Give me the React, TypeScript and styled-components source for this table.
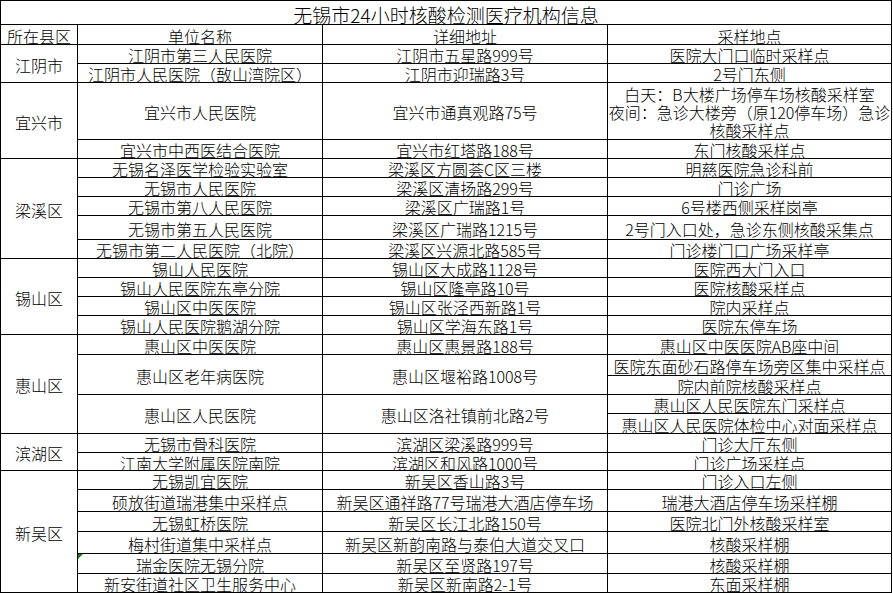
import React from "react";
import styled, { createGlobalStyle } from "styled-components";

const GlobalStyle = createGlobalStyle`
  html, body {
    margin: 0;
    padding: 0;
    background: #fff;
  }
  body {
    font-family: "Noto Sans CJK SC", "Noto Sans", sans-serif;
    color: #000;
  }
`;

// heights of every sheet row, border lines excluded
const rowHeights = [23, 19, 18, 18, 56, 18, 18, 18, 18, 23, 18, 18, 18, 18, 18, 19, 20, 18, 18, 19, 18, 17, 18, 21, 19, 21, 19, 18];

type Unit = { name: string; addr: string; spots: string[]; flag?: boolean };
type District = { name: string; units: Unit[] };

const districts: District[] = [
  {
    name: "江阴市",
    units: [
      { name: "江阴市第三人民医院", addr: "江阴市五星路999号", spots: ["医院大门口临时采样点"] },
      { name: "江阴市人民医院（敔山湾院区）", addr: "江阴市迎瑞路3号", spots: ["2号门东侧"] },
    ],
  },
  {
    name: "宜兴市",
    units: [
      {
        name: "宜兴市人民医院",
        addr: "宜兴市通真观路75号",
        spots: ["白天：B大楼广场停车场核酸采样室\n夜间：急诊大楼旁（原120停车场）急诊\n核酸采样点"],
      },
      { name: "宜兴市中西医结合医院", addr: "宜兴市红塔路188号", spots: ["东门核酸采样点"] },
    ],
  },
  {
    name: "梁溪区",
    units: [
      { name: "无锡名泽医学检验实验室", addr: "梁溪区方圆荟C区三楼", spots: ["明慈医院急诊科前"] },
      { name: "无锡市人民医院", addr: "梁溪区清扬路299号", spots: ["门诊广场"] },
      { name: "无锡市第八人民医院", addr: "梁溪区广瑞路1号", spots: ["6号楼西侧采样岗亭"] },
      { name: "无锡市第五人民医院", addr: "梁溪区广瑞路1215号", spots: ["2号门入口处，急诊东侧核酸采集点"] },
      { name: "无锡市第二人民医院（北院）", addr: "梁溪区兴源北路585号", spots: ["门诊楼门口广场采样亭"] },
    ],
  },
  {
    name: "锡山区",
    units: [
      { name: "锡山人民医院", addr: "锡山区大成路1128号", spots: ["医院西大门入口"] },
      { name: "锡山人民医院东亭分院", addr: "锡山区隆亭路10号", spots: ["医院核酸采样点"] },
      { name: "锡山区中医医院", addr: "锡山区张泾西新路1号", spots: ["院内采样点"] },
      { name: "锡山人民医院鹅湖分院", addr: "锡山区学海东路1号", spots: ["医院东停车场"] },
    ],
  },
  {
    name: "惠山区",
    units: [
      { name: "惠山区中医医院", addr: "惠山区惠景路188号", spots: ["惠山区中医医院AB座中间"] },
      {
        name: "惠山区老年病医院",
        addr: "惠山区堰裕路1008号",
        spots: ["医院东面砂石路停车场旁区集中采样点", "院内前院核酸采样点"],
      },
      {
        name: "惠山区人民医院",
        addr: "惠山区洛社镇前北路2号",
        spots: ["惠山区人民医院东门采样点", "惠山区人民医院体检中心对面采样点"],
      },
    ],
  },
  {
    name: "滨湖区",
    units: [
      { name: "无锡市骨科医院", addr: "滨湖区梁溪路999号", spots: ["门诊大厅东侧"] },
      { name: "江南大学附属医院南院", addr: "滨湖区和风路1000号", spots: ["门诊广场采样点"] },
    ],
  },
  {
    name: "新吴区",
    units: [
      { name: "无锡凯宜医院", addr: "新吴区香山路3号", spots: ["门诊入口左侧"] },
      { name: "硕放街道瑞港集中采样点", addr: "新吴区通祥路77号瑞港大酒店停车场", spots: ["瑞港大酒店停车场采样棚"] },
      { name: "无锡虹桥医院", addr: "新吴区长江北路150号", spots: ["医院北门外核酸采样室"] },
      { name: "梅村街道集中采样点", addr: "新吴区新韵南路与泰伯大道交叉口", spots: ["核酸采样棚"] },
      { name: "瑞金医院无锡分院", addr: "新吴区至贤路197号", spots: ["核酸采样棚"], flag: true },
      { name: "新安街道社区卫生服务中心", addr: "新吴区新南路2-1号", spots: ["东面采样棚"] },
    ],
  },
];

const Sheet = styled.div`
  display: grid;
  width: max-content;
  grid-template-columns: 76px 244px 284px 283px;
  grid-template-rows: ${rowHeights.map((h) => `${h}px`).join(" ")};
  gap: 1px;
  padding: 1px;
  background: #000;
`;

const Cell = styled.div<{ $col: number; $row: number; $rows?: number; $cols?: number; $flag?: boolean }>`
  position: relative;
  grid-column: ${(p) => p.$col} / span ${(p) => p.$cols ?? 1};
  grid-row: ${(p) => p.$row} / span ${(p) => p.$rows ?? 1};
  background: #fff;
  display: flex;
  align-items: center;
  justify-content: center;
  padding-top: 2px;
  font-size: 16px;
  font-weight: 300;
  line-height: 16px;
  text-align: center;
  white-space: nowrap;

  ${(p) =>
    p.$flag &&
    `
    &::before {
      content: "";
      position: absolute;
      top: 0;
      left: 0;
      border-top: 5px solid #1e7b1e;
      border-right: 5px solid transparent;
    }
  `}
`;

const Title = styled(Cell)`
  font-size: 19px;
  line-height: 19px;
  padding-top: 4px;
`;

const Lines = styled.div`
  line-height: 18px;
`;

function Spot({ text }: { text: string }) {
  const parts = text.split("\n");
  if (parts.length === 1) return <>{text}</>;
  return (
    <Lines>
      {parts.map((t, i) => (
        <div key={i}>{t}</div>
      ))}
    </Lines>
  );
}

export default function App() {
  const cells: React.ReactNode[] = [];
  let row = 3;

  districts.forEach((d) => {
    const dRows = d.units.reduce((n, u) => n + u.spots.length, 0);
    cells.push(
      <Cell key={d.name} $col={1} $row={row} $rows={dRows}>
        {d.name}
      </Cell>
    );
    d.units.forEach((u) => {
      const span = u.spots.length;
      cells.push(
        <Cell key={u.name} $col={2} $row={row} $rows={span} $flag={u.flag}>
          {u.name}
        </Cell>,
        <Cell key={u.name + "-addr"} $col={3} $row={row} $rows={span}>
          {u.addr}
        </Cell>
      );
      u.spots.forEach((s, i) => {
        cells.push(
          <Cell key={u.name + "-spot" + i} $col={4} $row={row + i}>
            <Spot text={s} />
          </Cell>
        );
      });
      row += span;
    });
  });

  return (
    <>
      <GlobalStyle />
      <Sheet>
        <Title $col={1} $row={1} $cols={4}>
          无锡市24小时核酸检测医疗机构信息
        </Title>
        <Cell $col={1} $row={2}>所在县区</Cell>
        <Cell $col={2} $row={2}>单位名称</Cell>
        <Cell $col={3} $row={2}>详细地址</Cell>
        <Cell $col={4} $row={2}>采样地点</Cell>
        {cells}
      </Sheet>
    </>
  );
}
